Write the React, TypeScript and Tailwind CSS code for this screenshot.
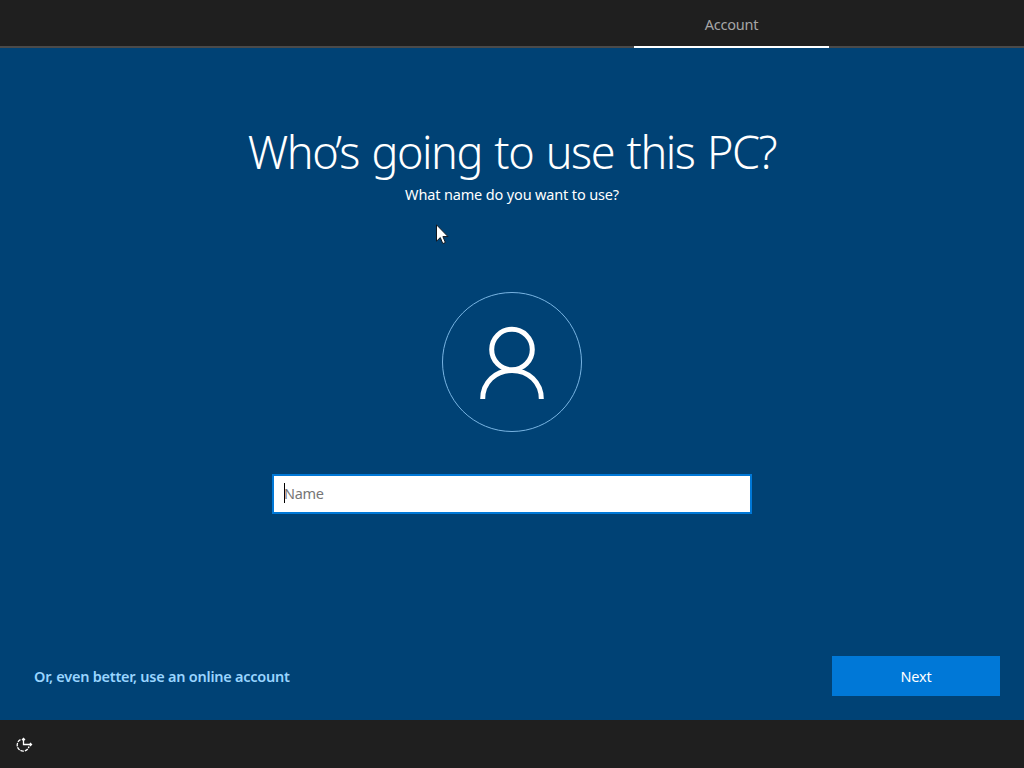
import React from "react";

function Cursor() {
  return (
    <svg className="absolute left-[436px] top-[224px]" width="13" height="21" viewBox="0 0 13 21">
      <path d="M.5 .8V17.2L4.3 13.6L6.8 19.6L9.4 18.5L6.9 12.6H12Z" fill="#fff" stroke="#101820" strokeWidth="1" />
    </svg>
  );
}

export default function App() {
  return (
    <div className="relative flex h-[768px] w-[1024px] flex-col overflow-hidden bg-[#004275] font-['Noto_Sans','Open_Sans',sans-serif] text-white">
      <header className="flex h-12 shrink-0 border-b-2 border-[#4a4a4a] bg-[#1f1f1f] pl-[634px]">
        <div className="-mb-0.5 flex h-12 w-[195px] items-center justify-center border-b-2 border-white pt-1 text-[14.5px] tracking-[-0.2px] text-[#a6a6a6]">
          Account
        </div>
      </header>

      <main className="flex flex-1 flex-col items-center">
        <h1 className="mt-[76px] h-[56px] whitespace-nowrap text-[45px] font-light leading-[56px] tracking-[-1.45px] [word-spacing:2.2px]">
          Wh<span className="tracking-[-2.9px]">o’</span>s going to use this PC?
        </h1>
        <p className="mt-[4px] h-5 whitespace-nowrap text-[14.5px] leading-5 tracking-[-0.15px]">What name do you want to use?</p>
        <svg className="mt-[88px] shrink-0" width="140" height="140" viewBox="0 0 140 140" fill="none">
          <circle cx="70" cy="70" r="69.5" stroke="#78b4e2" strokeWidth="1" />
          <circle cx="70" cy="57.5" r="20.3" stroke="#fff" strokeWidth="5" />
          <path d="M40.7 107C40.7 90.5 53.5 78.5 70 78.5S99.3 90.5 99.3 107" stroke="#fff" strokeWidth="5" />
        </svg>
        <div className="mt-[42px] flex h-10 w-[480px] items-center border-2 border-[#0078d7] bg-white pl-[10px]">
          <span className="-mt-0.5 h-5 w-px bg-black" />
          <span className="-ml-px text-[14.5px] tracking-[-0.3px] text-[#767676]">Name</span>
        </div>
        <div className="mb-6 mt-auto flex w-full items-center justify-between pl-[34px] pr-6">
          <a className="whitespace-nowrap pt-0.5 text-[14.5px] font-semibold tracking-[-0.24px] text-[#99d5ff]">Or, even better, use an online account</a>
          <button className="h-10 w-[168px] bg-[#0078d7] pt-0.5 text-[14.5px] tracking-[-0.2px]">Next</button>
        </div>
      </main>

      <footer className="flex h-12 shrink-0 items-center bg-[#1f1f1f] pl-[15px] pt-0.5">
        <svg width="18" height="16" viewBox="0 0 18 16" fill="none" stroke="#fff" strokeWidth="1.3">
          <path d="M5.5 2.7A6 6 0 1 0 14 9.5" strokeDasharray="3.4 1" />
          <path d="M8.5 1.5V7.5H16.5M7 3L8.5 1.5L10 3M15 6L16.5 7.5L15 9" />
        </svg>
      </footer>
      <Cursor />
    </div>
  );
}
